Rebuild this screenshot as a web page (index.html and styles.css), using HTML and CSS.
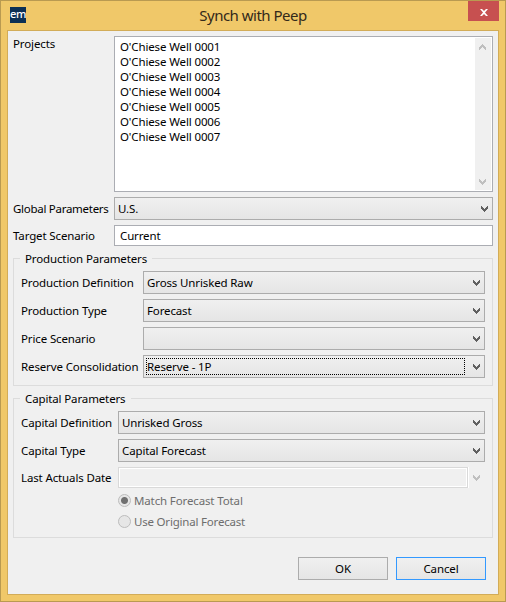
FILE: index.html
```html
<!DOCTYPE html>
<html lang="en">
<head>
<meta charset="utf-8">
<title>Synch with Peep</title>
<link rel="stylesheet" href="styles.css">
</head>
<body>
<svg class="defs" width="0" height="0">
  <symbol id="down" viewBox="0 0 7 6"><path d="M0 0h1v1h1v1h1v1h1v-1h1v-1h1v-1h1v3h-1v1h-1v1h-1v1h-1v-1h-1v-1h-1v-1h-1z"/></symbol>
</svg>
<div class="window">
  <header class="titlebar">
    <span class="app-icon">em</span>
    <h1 class="title">Synch with Peep</h1>
    <button class="close" aria-label="Close"><svg width="8" height="7" viewBox="0 0 8 7"><path d="M0 0h2l2 2 2-2h2L5 3.5 8 7H6L4 5 2 7H0l3-3.5z"/></svg></button>
  </header>
  <main class="client">
    <div class="row row-list">
      <label class="label">Projects</label>
      <div class="listbox">
        <ul class="items">
          <li>O'Chiese Well 0001</li>
          <li>O'Chiese Well 0002</li>
          <li>O'Chiese Well 0003</li>
          <li>O'Chiese Well 0004</li>
          <li>O'Chiese Well 0005</li>
          <li>O'Chiese Well 0006</li>
          <li>O'Chiese Well 0007</li>
        </ul>
        <div class="scrollbar"><svg class="chev up"><use href="#down"/></svg><svg class="chev"><use href="#down"/></svg></div>
      </div>
    </div>
    <div class="row row-global">
      <label class="label tight">Global Parameters</label>
      <div class="combo"><span>U.S.</span><svg class="chev"><use href="#down"/></svg></div>
    </div>
    <div class="row row-target">
      <label class="label">Target Scenario</label>
      <div class="input">Current</div>
    </div>
    <section class="group production">
      <h2 class="legend">Production Parameters</h2>
      <div class="row"><label class="label">Production Definition</label><div class="combo"><span>Gross Unrisked Raw</span><svg class="chev"><use href="#down"/></svg></div></div>
      <div class="row"><label class="label">Production Type</label><div class="combo"><span>Forecast</span><svg class="chev"><use href="#down"/></svg></div></div>
      <div class="row"><label class="label">Price Scenario</label><div class="combo"><span></span><svg class="chev"><use href="#down"/></svg></div></div>
      <div class="row"><label class="label">Reserve Consolidation</label><div class="combo focused"><span>Reserve - 1P</span><svg class="chev"><use href="#down"/></svg></div></div>
    </section>
    <section class="group capital">
      <h2 class="legend">Capital Parameters</h2>
      <div class="row"><label class="label">Capital Definition</label><div class="combo"><span>Unrisked Gross</span><svg class="chev"><use href="#down"/></svg></div></div>
      <div class="row"><label class="label">Capital Type</label><div class="combo"><span>Capital Forecast</span><svg class="chev"><use href="#down"/></svg></div></div>
      <div class="row row-date"><label class="label">Last Actuals Date</label><div class="date"></div><svg class="chev"><use href="#down"/></svg></div>
      <div class="radio"><i class="dot on"></i><span>Match Forecast Total</span></div>
      <div class="radio"><i class="dot"></i><span class="snug">Use Original Forecast</span></div>
    </section>
    <footer class="buttons">
      <button class="btn">OK</button>
      <button class="btn default">Cancel</button>
    </footer>
  </main>
</div>
</body>
</html>
```
FILE: styles.css
```css
* { box-sizing: border-box; }
body {
  margin: 0;
  font: 11.5px/15px "Noto Sans", "Open Sans", sans-serif;
  letter-spacing: -0.13px;
  color: #000;
}
.defs { display: block; }
.window {
  width: 506px;
  height: 602px;
  background: #f0c869;
  border: 1px solid #b99a51;
  padding: 0 6px 6px;
}
.titlebar {
  height: 29px;
  display: grid;
  grid-template-columns: 31px 1fr 31px;
  align-items: start;
}
.app-icon {
  width: 16px;
  height: 16px;
  margin: 6px 0 0 3px;
  background: #0c3055;
  color: #fff;
  font-size: 11px;
  font-weight: 500;
  line-height: 14px;
  text-align: center;
  letter-spacing: -0.4px;
}
.title {
  margin: 5px 0 0;
  font-size: 15px;
  font-weight: 400;
  line-height: 19px;
  letter-spacing: -0.5px;
  text-align: center;
  color: #33291a;
}
.close {
  width: 31px;
  height: 20px;
  padding: 0;
  border: 0;
  background: #c75050;
  display: flex;
  align-items: center;
  justify-content: center;
}
.close svg { fill: #fff; margin-top: 2px; margin-left: 1px; }
.client {
  height: 565px;
  border: 1px solid #d2ac58;
  background: #f0f0f0;
  padding: 5px 5px 0 5px;
}
.row { display: flex; margin-bottom: 5px; }
.label { width: 101px; flex: none; padding-top: 4px; white-space: nowrap; }
.tight { letter-spacing: -0.28px; }
.snug { letter-spacing: -0.2px; }
.row-list .label { padding-top: 0; }
.listbox {
  flex: 1;
  height: 156px;
  border: 1px solid #abadb3;
  background: #fff;
  padding: 1px;
  display: flex;
}
.items { flex: 1; list-style: none; margin: 0; padding: 1px 0 0 4px; }
.scrollbar {
  width: 16px;
  background: #f0f0f0;
  display: flex;
  flex-direction: column;
  align-items: flex-start;
  justify-content: space-between;
  padding: 6px 0 5px 4px;
}
.chev { width: 7px; height: 6px; flex: none; fill: #606060; shape-rendering: crispEdges; }
.scrollbar .chev, .row-date .chev { fill: #bfbfbf; }
.up { transform: rotate(180deg); }
.combo {
  flex: 1;
  height: 23px;
  border: 1px solid #acacac;
  background: linear-gradient(#f0f0f0, #e5e5e5);
  display: flex;
  align-items: center;
  padding: 0 4px 0 2px;
}
.combo span { flex: 1; margin-right: 8px; border: 1px solid transparent; height: 17px; line-height: 15px; }
.combo.focused span { border: 1px dotted #000; }
.combo .chev, .row-date .chev { margin-top: 1px; }
.input {
  flex: 1;
  height: 21px;
  border: 1px solid #abadb3;
  background: #fff;
  padding: 2px 5px;
}
.row-target .label { padding-top: 3px; }
.group {
  border: 1px solid #dcdcdc;
  margin-top: 12px;
  padding: 0 7px 0 7px;
}
.production { height: 128px; }
.capital { height: 140px; }
.legend {
  margin: -8px 0 5px -1px;
  width: max-content;
  padding: 0 5px;
  background: #f0f0f0;
  font: inherit;
}
.production .label { width: 122px; }
.capital .label { width: 97px; }
.date { width: 350px; height: 21px; border: 1px solid #d9d9d9; box-shadow: inset 0 0 0 1px #fff, 1px 0 #fff; }
.row-date { align-items: center; }
.row-date .label { padding-top: 0; }
.row-date .chev { margin-left: 5px; }
.radio { margin: 0 0 6px 97px; display: flex; align-items: center; height: 15px; color: #6d6d6d; }
.dot {
  width: 13px;
  height: 13px;
  border: 1px solid #bcbcbc;
  border-radius: 50%;
  background: #e6e6e6;
  margin-right: 3px;
}
.dot.on { background: radial-gradient(circle, #707070 3px, #e6e6e6 4px); }
.buttons { display: flex; justify-content: flex-end; gap: 8px; margin: 19px 7px 0 0; }
.btn {
  width: 90px;
  height: 23px;
  padding: 0;
  border: 1px solid #acacac;
  background: linear-gradient(#f0f0f0, #e5e5e5);
  font: inherit;
  letter-spacing: inherit;
  color: #000;
}
.btn.default { border-color: #3399ff; }
```
